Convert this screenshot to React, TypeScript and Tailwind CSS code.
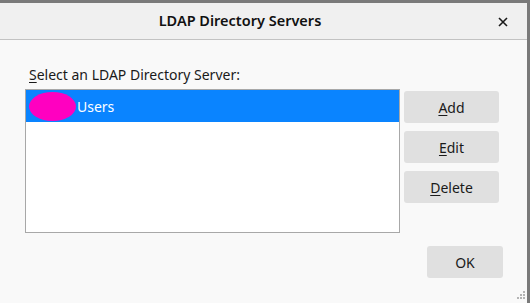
import React from "react";

const font = { fontFamily: '"Noto Sans", "Open Sans", sans-serif' };

const DialogButton: React.FC<{ accel?: string; rest: string; className?: string }> = ({
  accel,
  rest,
  className = "",
}) => (
  <button
    className={`flex items-center justify-center rounded-[3px] bg-[#e0e0e0] text-[14px] text-[#1a1a1a] ${className}`}
  >
    {accel && <span className="underline underline-offset-[2px]">{accel}</span>}
    {rest}
  </button>
);

export default function App() {
  return (
    <div
      className="relative flex h-[303px] w-[530px] flex-col border-t-[3px] border-r-[3px] border-[#7a7a7a] bg-[#f9f9f9]"
      style={font}
    >
      {/* title bar */}
      <div className="relative flex h-[37px] items-center justify-center border-b border-[#c2c2c2] bg-[#f0f0f0] pr-[47px]">
        <span className="text-[14.5px] font-semibold text-[#111]">LDAP Directory Servers</span>
        <svg
          className="absolute right-[19px] top-[14px]"
          width="10"
          height="10"
          viewBox="0 0 10 10"
        >
          <path d="M1 1 L9 9 M9 1 L1 9" stroke="#1a1a1a" strokeWidth="1.6" />
        </svg>
      </div>

      {/* body */}
      <div className="flex flex-col pl-[25px] pr-[28px]">
        <div className="mt-[25px] pl-[4px] text-[14px] leading-[20px] text-[#1a1a1a]">
          <span className="underline underline-offset-[2px]">S</span>elect an LDAP Directory Server:
        </div>

        <div className="mt-[4px] flex">
          <div className="h-[144px] w-[375px] border border-[#a8a8a8] bg-white">
            <div className="flex h-[32px] items-center bg-[#0a84ff] pl-[3px]">
              <div className="h-[29px] w-[47px] rounded-[50%] bg-[#ff00c0]" />
              <span className="pl-[1px] text-[14px] text-white">Users</span>
            </div>
          </div>

          <div className="ml-[4px] mt-[2px] flex w-[95px] flex-col gap-[8px]">
            <DialogButton accel="A" rest="dd" className="h-[32px]" />
            <DialogButton accel="E" rest="dit" className="h-[32px]" />
            <DialogButton accel="D" rest="elete" className="h-[32px]" />
          </div>
        </div>
      </div>

      <div className="mt-[13px] flex justify-end pr-[24px]">
        <DialogButton rest="OK" className="h-[32px] w-[76px]" />
      </div>

      {/* resize grip */}
      <div className="absolute bottom-[4px] right-[2px] grid grid-cols-3 gap-[1px]">
        <span className="h-[2px] w-[2px]" />
        <span className="h-[2px] w-[2px]" />
        <span className="h-[2px] w-[2px] bg-[#b4b4b4]" />
        <span className="h-[2px] w-[2px]" />
        <span className="h-[2px] w-[2px] bg-[#b4b4b4]" />
        <span className="h-[2px] w-[2px] bg-[#b4b4b4]" />
        <span className="h-[2px] w-[2px] bg-[#b4b4b4]" />
        <span className="h-[2px] w-[2px] bg-[#b4b4b4]" />
        <span className="h-[2px] w-[2px] bg-[#b4b4b4]" />
      </div>
    </div>
  );
}
